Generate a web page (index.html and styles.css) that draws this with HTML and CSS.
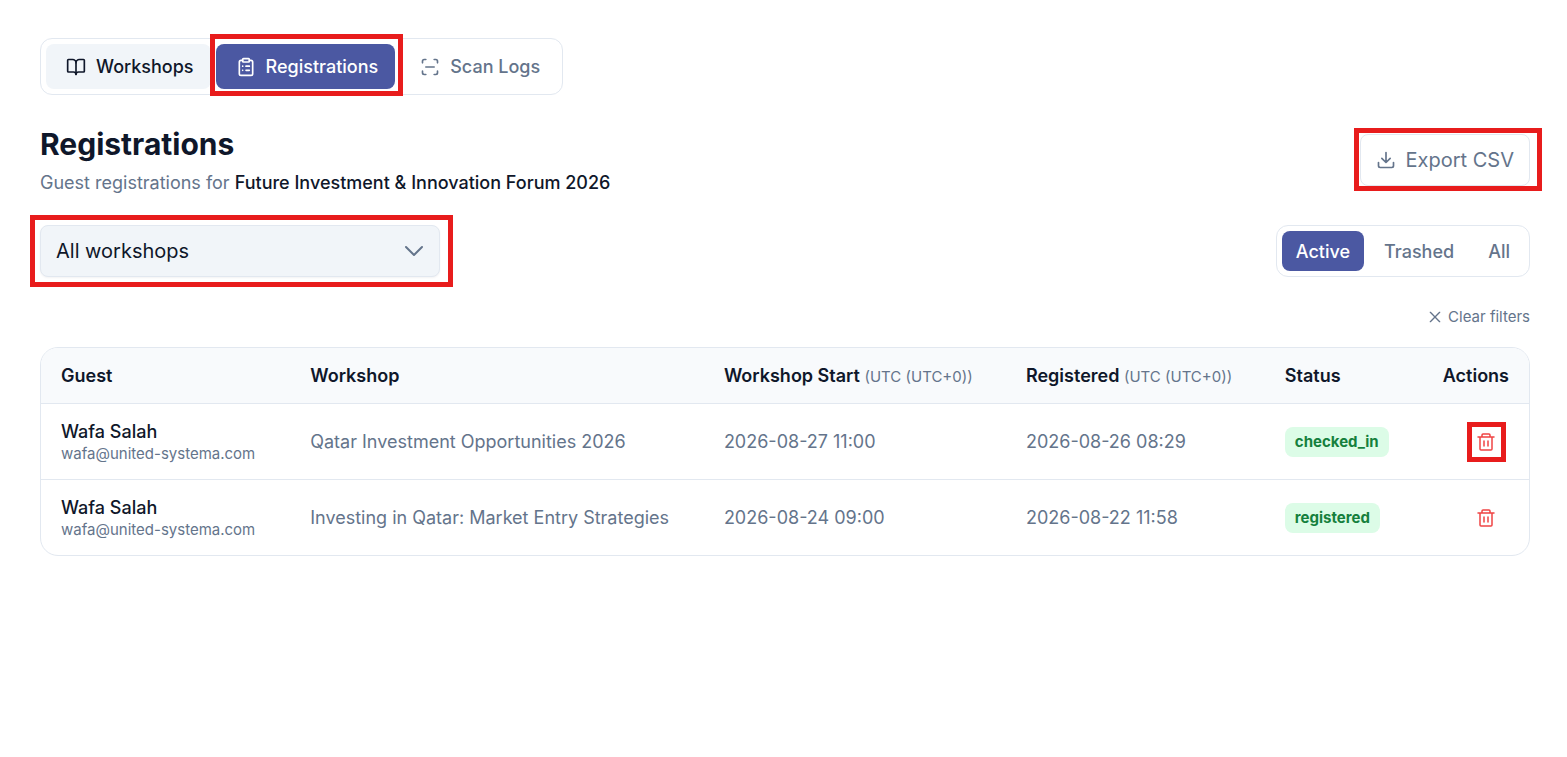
FILE: index.html
```html
<!DOCTYPE html>
<html lang="en">
<head>
	<meta charset="utf-8">
	<meta name="viewport" content="width=device-width, initial-scale=1">
	<title>Registrations</title>
	<link rel="stylesheet" href="styles.css">
</head>
<body>
	<main class="page">
		<nav class="tabs">
			<button type="button" class="tab hover">
				<svg class="icon" viewBox="0 0 24 24"><path d="M12 7v14"/><path d="M3 18a1 1 0 0 1-1-1V4a1 1 0 0 1 1-1h5a4 4 0 0 1 4 4 4 4 0 0 1 4-4h5a1 1 0 0 1 1 1v13a1 1 0 0 1-1 1h-6a3 3 0 0 0-3 3 3 3 0 0 0-3-3z"/></svg>
				Workshops
			</button>
			<button type="button" class="tab active mark mark-tab">
				<svg class="icon" viewBox="0 0 24 24"><rect width="8" height="4" x="8" y="2" rx="1"/><path d="M16 4h2a2 2 0 0 1 2 2v14a2 2 0 0 1-2 2H6a2 2 0 0 1-2-2V6a2 2 0 0 1 2-2h2"/><path d="M12 11h4M12 16h4M8 11h.01M8 16h.01"/></svg>
				Registrations
			</button>
			<button type="button" class="tab">
				<svg class="icon" viewBox="0 0 24 24"><path d="M3 7V5a2 2 0 0 1 2-2h2M17 3h2a2 2 0 0 1 2 2v2M21 17v2a2 2 0 0 1-2 2h-2M7 21H5a2 2 0 0 1-2-2v-2M7 12h10"/></svg>
				Scan Logs
			</button>
		</nav>

		<header class="head">
			<div>
				<h1>Registrations</h1>
				<p class="sub">Guest registrations for <strong>Future Investment &amp; Innovation Forum 2026</strong></p>
			</div>
			<button type="button" class="export mark mark-export">
				<svg class="icon" viewBox="0 0 24 24"><path d="M21 15v4a2 2 0 0 1-2 2H5a2 2 0 0 1-2-2v-4"/><path d="M7 10l5 5 5-5M12 15V3"/></svg>
				Export CSV
			</button>
		</header>

		<div class="filters">
			<div class="picker mark mark-picker">
				<select aria-label="Workshop">
					<option>All workshops</option>
					<option>Qatar Investment Opportunities 2026</option>
					<option>Investing in Qatar: Market Entry Strategies</option>
				</select>
				<svg class="chevron" viewBox="0 0 20 20"><path d="M2 6l8 8 8-8"/></svg>
			</div>
			<div class="segment">
				<button type="button" class="seg active">Active</button>
				<button type="button" class="seg">Trashed</button>
				<button type="button" class="seg">All</button>
			</div>
		</div>

		<div class="clear-row">
			<button type="button" class="clear">
				<svg class="icon-x" viewBox="0 0 24 24"><path d="M19 5L5 19M5 5l14 14"/></svg>
				Clear filters
			</button>
		</div>

		<div class="card">
			<table>
				<thead>
					<tr>
						<th class="c-guest">Guest</th>
						<th class="c-workshop">Workshop</th>
						<th class="c-start">Workshop Start <small>(UTC (UTC+0))</small></th>
						<th class="c-reg">Registered <small>(UTC (UTC+0))</small></th>
						<th class="c-status">Status</th>
						<th class="c-actions">Actions</th>
					</tr>
				</thead>
				<tbody>
					<tr>
						<td><div class="name">Wafa Salah</div><div class="email">wafa@united-systema.com</div></td>
						<td>Qatar Investment Opportunities 2026</td>
						<td>2026-08-27 11:00</td>
						<td>2026-08-26 08:29</td>
						<td><span class="badge">checked_in</span></td>
						<td class="c-actions">
							<button type="button" class="trash mark mark-trash" aria-label="Delete registration">
								<svg class="icon" viewBox="0 0 20 20"><path d="M2 5h16M6 5V3a1 1 0 0 1 1-1h6a1 1 0 0 1 1 1v2M4 5v12a1 1 0 0 0 1 1h10a1 1 0 0 0 1-1V5M8 9v5M12 9v5"/></svg>
							</button>
						</td>
					</tr>
					<tr>
						<td><div class="name">Wafa Salah</div><div class="email">wafa@united-systema.com</div></td>
						<td>Investing in Qatar: Market Entry Strategies</td>
						<td>2026-08-24 09:00</td>
						<td>2026-08-22 11:58</td>
						<td><span class="badge">registered</span></td>
						<td class="c-actions">
							<button type="button" class="trash" aria-label="Delete registration">
								<svg class="icon" viewBox="0 0 20 20"><path d="M2 5h16M6 5V3a1 1 0 0 1 1-1h6a1 1 0 0 1 1 1v2M4 5v12a1 1 0 0 0 1 1h10a1 1 0 0 0 1-1V5M8 9v5M12 9v5"/></svg>
							</button>
						</td>
					</tr>
				</tbody>
			</table>
		</div>
	</main>
</body>
</html>
```
FILE: styles.css
```css
* { box-sizing: border-box; }

body {
	margin: 0;
	background: #fff;
	color: #0f172a;
	font: 18px/25px Inter, "Liberation Sans", sans-serif;
}

button, select {
	font: inherit;
	color: inherit;
	margin: 0;
	padding: 0;
	border: 0;
	background: none;
	cursor: pointer;
}

svg {
	display: block;
	flex: none;
	fill: none;
	stroke: currentColor;
	stroke-width: 2;
	stroke-linecap: round;
	stroke-linejoin: round;
}

.icon { width: 20px; height: 20px; }

.page { padding: 38px 37px 40px 40px; }

/* tabs */
.tabs {
	display: flex;
	gap: 5px;
	width: fit-content;
	padding: 5px;
	border: 1px solid #e2e8f0;
	border-radius: 12px;
}

.tab {
	display: flex;
	align-items: center;
	gap: 10px;
	padding: 10px 17px 10px 20px;
	border-radius: 8px;
	color: #64748b;
	font-weight: 500;
}

.tab.hover { background: #f1f5f9; color: #0f172a; }
.tab.active, .seg.active { background: #4b58a2; color: #fff; }

/* title */
.head {
	display: flex;
	justify-content: space-between;
	align-items: center;
	margin-top: 30px;
}

h1 {
	margin: 0 0 7px;
	font-size: 30px;
	line-height: 38px;
	font-weight: 700;
}

.sub { margin: 0; color: #64748b; }
.sub strong { color: #0f172a; font-weight: 500; }

.export {
	display: flex;
	align-items: center;
	gap: 10px;
	height: 52px;
	padding: 0 15px;
	border: 1px solid #e2e8f0;
	border-radius: 8px;
	color: #64748b;
	font-size: 20px;
}

/* filters */
.filters {
	display: flex;
	justify-content: space-between;
	margin-top: 30px;
}

.picker { width: 400px; }

.picker select {
	display: block;
	appearance: none;
	width: 100%;
	height: 52px;
	padding: 0 48px 0 15px;
	border: 1px solid #e2e8f0;
	border-radius: 8px;
	background: #f1f5f9;
	box-shadow: 0 1px 2px rgba(15, 23, 42, 0.05);
	font-size: 20px;
}

.chevron {
	position: absolute;
	top: 16px;
	right: 16px;
	width: 20px;
	height: 20px;
	color: #64748b;
	pointer-events: none;
}

.segment {
	display: flex;
	gap: 6px;
	padding: 5px;
	border: 1px solid #e2e8f0;
	border-radius: 12px;
}

.seg {
	height: 40px;
	padding: 0 14px;
	border-radius: 8px;
	color: #64748b;
	font-weight: 500;
}

.clear-row {
	display: flex;
	justify-content: flex-end;
	margin: 30px 0 20px;
}

.clear {
	display: flex;
	align-items: center;
	gap: 5px;
	color: #64748b;
	font-size: 15px;
	line-height: 20px;
}

.icon-x { width: 16px; height: 16px; }

/* table */
.card {
	border: 1px solid #e2e8f0;
	border-radius: 18px;
	overflow: hidden;
}

table { width: 100%; border-collapse: separate; border-spacing: 0; table-layout: fixed; }

th {
	padding: 15px 20px;
	background: #f8fafc;
	border-bottom: 1px solid #e2e8f0;
	text-align: left;
	font-weight: 600;
	white-space: nowrap;
}

th small { color: #64748b; font-size: 15px; line-height: 20px; font-weight: 400; }

td {
	padding: 15px 20px;
	border-bottom: 1px solid #e2e8f0;
	color: #64748b;
	vertical-align: middle;
}

tbody tr:last-child td { border-bottom: 0; }

.c-guest { width: 16.75%; }
.c-workshop { width: 27.8%; }
.c-start { width: 20.3%; }
.c-reg { width: 17.4%; }
.c-status { width: 9%; }
.c-actions { text-align: right; }

.name { color: #0f172a; font-weight: 500; }
.email { font-size: 15px; line-height: 20px; }

.badge {
	display: block;
	width: fit-content;
	padding: 5px 10px;
	border-radius: 8px;
	background: #dcfce7;
	color: #15803d;
	font-size: 15px;
	line-height: 20px;
	font-weight: 700;
}

.trash {
	display: block;
	margin-left: auto;
	padding: 10px 13px;
	color: #ef4444;
}

.trash svg { stroke-width: 1.5; }

/* red highlight frames */
.mark { position: relative; }

.mark::after {
	content: "";
	position: absolute;
	border: 5px solid #e81c1c;
	pointer-events: none;
}

.mark-tab::after { inset: -10px -8px -7px -6px; }
.mark-export::after { inset: -7px -13px -6px -7px; }
.mark-picker::after { inset: -10px -13px -10px -10px; }
.mark-trash::after { inset: 0 3px 0 4px; }
```
